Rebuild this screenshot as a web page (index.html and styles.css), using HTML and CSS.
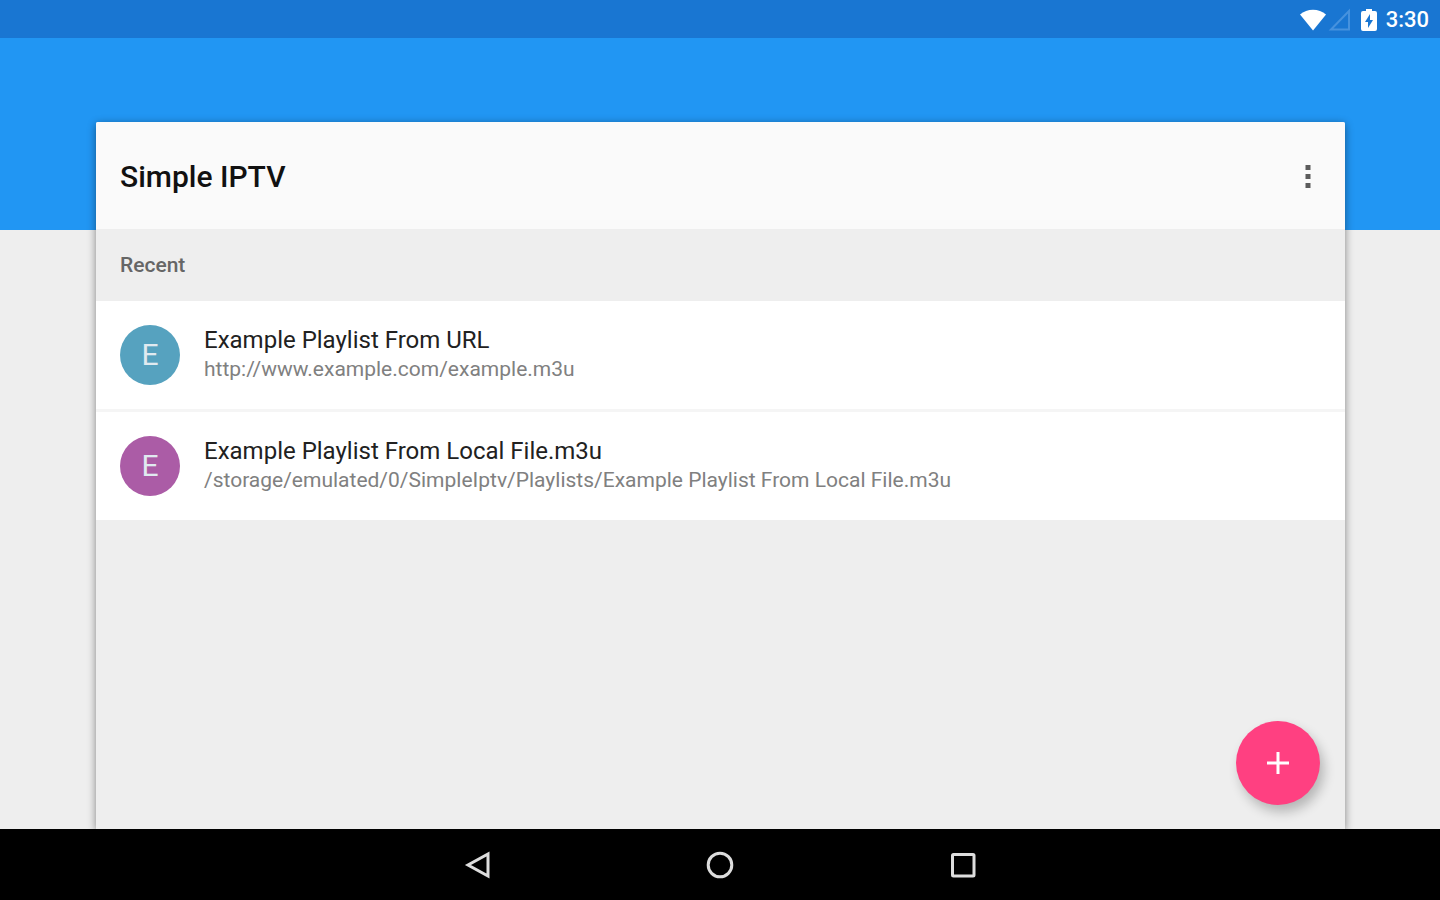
FILE: index.html
```html
<!DOCTYPE html>
<html lang="en">
<head>
<meta charset="utf-8">
<meta name="viewport" content="width=device-width, initial-scale=1">
<title>Simple IPTV</title>
<link rel="stylesheet" href="styles.css">
</head>
<body>
<header class="status-bar">
  <svg class="status-icons" width="80" height="26" viewBox="0 0 80 26" aria-hidden="true">
    <path d="M0 7.500C7 1 19 1 26 7.500L13 23.500Z" fill="#fff"/>
    <path d="M49 4V22.500H31Z" fill="none" stroke="#4692de" stroke-width="2"/>
    <path fill-rule="evenodd" d="M66 2h6v2h3a2 2 0 0 1 2 2v16a2 2 0 0 1-2 2H63a2 2 0 0 1-2-2V6a2 2 0 0 1 2-2h3ZM70 7l-5 8h3v6l5-8h-3Z" fill="#fff"/>
  </svg>
  <time class="clock">3:30</time>
</header>
<main class="stage">
  <section class="card">
    <header class="toolbar">
      <h1 class="title">Simple IPTV</h1>
      <button class="overflow" type="button" aria-label="More options">
        <svg width="6" height="26" viewBox="0 0 6 26"><path d="M0.500 2h5v5h-5zM0.500 11h5v5h-5zM0.500 20h5v5h-5z" fill="#5c5c5c"/></svg>
      </button>
    </header>
    <h2 class="subheader">Recent</h2>
    <ul class="playlists">
      <li class="playlist">
        <span class="avatar avatar-teal">E</span>
        <div class="details">
          <p class="name">Example Playlist From URL</p>
          <p class="source">http://www.example.com/example.m3u</p>
        </div>
      </li>
      <li class="playlist">
        <span class="avatar avatar-purple">E</span>
        <div class="details">
          <p class="name">Example Playlist From Local File.m3u</p>
          <p class="source">/storage/emulated/0/SimpleIptv/Playlists/Example Playlist From Local File.m3u</p>
        </div>
      </li>
    </ul>
    <button class="fab" type="button" aria-label="Add playlist">
      <svg width="22" height="22" viewBox="0 0 22 22"><path d="M11 0v22M0 11h22" stroke="#fff" stroke-width="3"/></svg>
    </button>
  </section>
</main>
<nav class="nav-bar" aria-label="System navigation">
  <button class="nav-button" type="button" aria-label="Back">
    <svg width="30" height="30" viewBox="0 0 30 30"><path d="M26 4V26L6 15Z"/></svg>
  </button>
  <button class="nav-button" type="button" aria-label="Home">
    <svg width="30" height="30" viewBox="0 0 30 30"><circle cx="15" cy="15" r="11.800"/></svg>
  </button>
  <button class="nav-button" type="button" aria-label="Recent apps">
    <svg width="30" height="30" viewBox="0 0 30 30"><rect x="4.500" y="4.500" width="21.500" height="21.500" rx="1"/></svg>
  </button>
</nav>
</body>
</html>
```
FILE: styles.css
```css
* {
  box-sizing: border-box;
}

body {
  display: flex;
  flex-direction: column;
  min-height: 100vh;
  margin: 0;
  background: #eee;
  color: #212121;
  font-family: Roboto, "Noto Sans", sans-serif;
}

h1, h2, p, ul {
  margin: 0;
  padding: 0;
}

button {
  display: flex;
  align-items: center;
  justify-content: center;
  padding: 0;
  border: 0;
  background: none;
  cursor: pointer;
}

.status-bar {
  display: flex;
  align-items: center;
  justify-content: flex-end;
  gap: 6px;
  height: 38px;
  padding: 2px 11px 0 0;
  background: #1976d2;
  color: #fff;
}

.clock {
  font-size: 22px;
  font-weight: 500;
  line-height: 36px;
}

.stage {
  display: flex;
  flex: 1;
  padding: 84px 95px 0 96px;
  background: linear-gradient(#2196f3, #2196f3) top / 100% 192px no-repeat;
  overflow: hidden;
}

.card {
  position: relative;
  flex: 1;
  border-radius: 2px 2px 0 0;
  background: #eee;
  box-shadow: 0 2px 8px rgba(0, 0, 0, 0.45);
}

.toolbar {
  display: flex;
  align-items: center;
  justify-content: space-between;
  height: 107px;
  padding: 0 13px 0 24px;
  border-radius: 2px 2px 0 0;
  background: #fafafa;
}

.title {
  padding-top: 3px;
  color: #111;
  font-size: 30px;
  font-weight: 500;
  line-height: 36px;
}

.overflow {
  width: 48px;
  height: 48px;
}

.subheader {
  padding: 1px 24px 0;
  color: #666;
  font-size: 21px;
  font-weight: 500;
  line-height: 71px;
}

.playlists {
  list-style: none;
}

.playlist {
  display: flex;
  gap: 24px;
  height: 108px;
  padding: 24px;
  background: #fff;
}

.playlist + .playlist {
  height: 111px;
  border-top: 3px solid #f5f5f5;
}

.avatar {
  flex: none;
  width: 60px;
  height: 60px;
  border-radius: 50%;
  color: #e0eaf0;
  font-size: 30px;
  line-height: 60px;
  text-align: center;
}

.avatar-teal {
  background: #56a2bf;
}

.avatar-purple {
  background: #ab5ca6;
}

.name {
  font-size: 24px;
  line-height: 30px;
}

.source {
  color: #808080;
  font-size: 21px;
  line-height: 28px;
}

.fab {
  position: absolute;
  right: 25px;
  bottom: 24px;
  width: 84px;
  height: 84px;
  border-radius: 50%;
  background: #ff4081;
  box-shadow: 4px 7px 12px rgba(0, 0, 0, 0.24);
}

.nav-bar {
  display: flex;
  justify-content: center;
  height: 71px;
  background: #000;
}

.nav-button {
  width: 243px;
}

.nav-button svg {
  fill: none;
  stroke: #ddd;
  stroke-width: 3;
}
```
